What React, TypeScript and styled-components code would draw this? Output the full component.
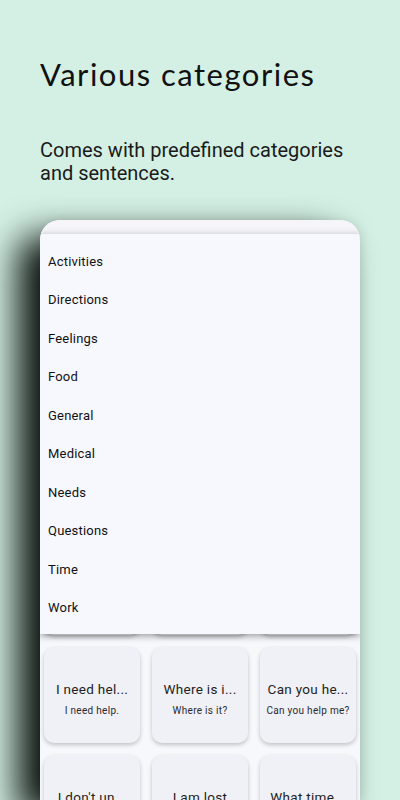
import styled, { createGlobalStyle } from 'styled-components';

const categories = [
  'Activities',
  'Directions',
  'Feelings',
  'Food',
  'General',
  'Medical',
  'Needs',
  'Questions',
  'Time',
  'Work',
];

const phrases = [
  { short: 'Hello', full: 'Hello.' },
  { short: 'Thank you', full: 'Thank you.' },
  { short: 'Goodbye', full: 'Goodbye.' },
  { short: 'Yes', full: 'Yes.' },
  { short: 'No', full: 'No.' },
  { short: 'Please', full: 'Please.' },
  { short: 'Sorry', full: 'Sorry.' },
  { short: 'Excuse me', full: 'Excuse me.' },
  { short: 'Help', full: 'Help!' },
  { short: 'I need hel...', full: 'I need help.' },
  { short: 'Where is i...', full: 'Where is it?' },
  { short: 'Can you he...', full: 'Can you help me?' },
  { short: "I don't un...", full: "I don't understand." },
  { short: 'I am lost', full: 'I am lost.' },
  { short: 'What time...', full: 'What time is it?' },
];

const GlobalStyle = createGlobalStyle`
  html, body {
    margin: 0;
    padding: 0;
    height: 800px;
    overflow: hidden;
    background: #d4f0e4;
  }
  body {
    font-family: Roboto, "Noto Sans", Arial, sans-serif;
    -webkit-font-smoothing: antialiased;
  }
`;

const Page = styled.div`
  width: 400px;
  height: 800px;
  background: #d4f0e4;
  display: flex;
  flex-direction: column;
  overflow: hidden;
`;

const Header = styled.header`
  padding: 54px 40px 0;
`;

const Title = styled.h1`
  margin: 0;
  font-family: Lato, "Open Sans", sans-serif;
  font-weight: 400;
  font-size: 31px;
  line-height: 40px;
  color: #111;
  letter-spacing: 1.5px;
`;

const Subtitle = styled.p`
  margin: 45px 0 0;
  font-family: Roboto, sans-serif;
  font-size: 20px;
  line-height: 23px;
  color: #1a1a1a;
`;

const Phone = styled.div`
  position: relative;
  margin: 35px 40px 0;
  flex: 1;
  background: #f7f8fc;
  border-radius: 20px 20px 0 0;
  box-shadow: -22px 16px 36px rgba(8, 14, 11, 1), 2px 0 10px rgba(0, 0, 0, 0.08);
  overflow: hidden;
`;

const StatusBar = styled.div`
  height: 14px;
  background: #f5f5fa;
`;

const Grid = styled.div`
  display: grid;
  grid-template-columns: repeat(3, 1fr);
  gap: 12px;
  padding: 89px 4px 0;
`;

const Card = styled.div`
  height: 96px;
  background: #f0f1f6;
  border-radius: 10px;
  box-shadow: 0 2px 4px rgba(0, 0, 0, 0.22);
  display: flex;
  flex-direction: column;
  align-items: center;
  justify-content: center;
  gap: 8px;
  padding-top: 6px;
  box-sizing: border-box;
`;

const CardTitle = styled.span`
  font-size: 13.5px;
  letter-spacing: 0.3px;
  color: #1e1e22;
  white-space: nowrap;
`;

const CardText = styled.span`
  font-size: 10px;
  letter-spacing: 0.3px;
  color: #2a2a2e;
  white-space: nowrap;
`;

const Menu = styled.ul`
  position: absolute;
  top: 14px;
  left: 0;
  right: 0;
  margin: 0;
  padding: 8px 0 7px;
  list-style: none;
  background: #f7f8fd;
  box-shadow: 0 3px 6px rgba(0, 0, 0, 0.3), 0 -2px 6px rgba(0, 0, 0, 0.08);
`;

const MenuItem = styled.li`
  height: 38.5px;
  display: flex;
  align-items: center;
  padding-left: 8px;
  font-size: 13px;
  font-weight: 400;
  letter-spacing: 0.2px;
  color: #111114;
`;

const App = () => {
  return (
    <>
      <GlobalStyle />
      <Page>
        <Header>
          <Title>Various categories</Title>
          <Subtitle>
            Comes with predefined categories
            <br />
            and sentences.
          </Subtitle>
        </Header>
        <Phone>
          <StatusBar />
          <Grid>
            {phrases.map((phrase) => (
              <Card key={phrase.full}>
                <CardTitle>{phrase.short}</CardTitle>
                <CardText>{phrase.full}</CardText>
              </Card>
            ))}
          </Grid>
          <Menu>
            {categories.map((category) => (
              <MenuItem key={category}>{category}</MenuItem>
            ))}
          </Menu>
        </Phone>
      </Page>
    </>
  );
};

export default App;
